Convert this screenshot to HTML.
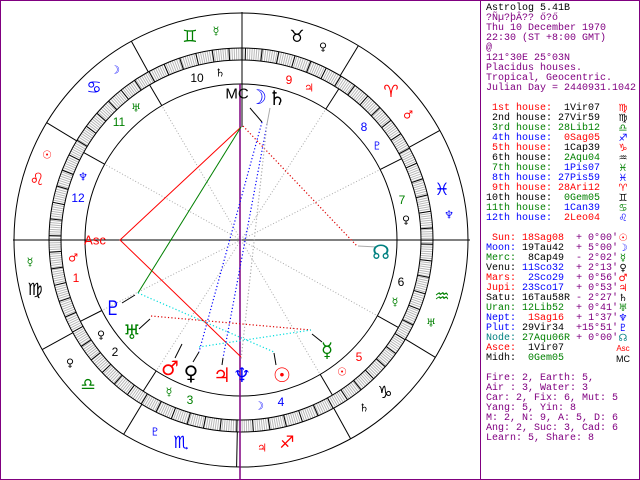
<!DOCTYPE html>
<html><head><meta charset="utf-8"><style>
html,body{margin:0;padding:0;background:#fff;}
#w{position:relative;width:640px;height:480px;overflow:hidden;background:#fff;}
svg{position:absolute;left:0;top:0;}
svg text{font-family:"DejaVu Sans",sans-serif;text-anchor:middle;dominant-baseline:central;}
pre{position:absolute;left:486px;top:4px;margin:0;font-family:"Liberation Mono",monospace;font-size:10px;line-height:10px;color:#000;}
.p{color:#800080}.r{color:#f00}.g{color:#008000}.b{color:#00f}.t{color:#008080}
.gl{position:absolute;left:616px;width:14px;text-align:center;font-family:"DejaVu Sans",sans-serif;font-size:10px;line-height:10px;}
</style></head><body><div id="w">
<svg width="640" height="480" viewBox="0 0 640 480">
<rect x="0.5" y="0.5" width="639" height="479" fill="none" stroke="#800080"/>
<line x1="480.5" y1="0" x2="480.5" y2="480" stroke="#800080"/>
<!-- ring -->
<circle cx="241" cy="240" r="186" fill="none" stroke="#b8b8b8" stroke-width="12" stroke-dasharray="1 1.2"/>
<circle cx="241" cy="240" r="186" fill="none" stroke="#000" stroke-width="12" stroke-dasharray="1 15.23" stroke-dashoffset="-3.64"/>
<g fill="none" stroke="#000" stroke-width="1">
<circle cx="241" cy="240" r="227"/>
<circle cx="241" cy="240" r="192"/>
<circle cx="241" cy="240" r="180"/>
<circle cx="241" cy="240" r="156"/>
<line x1="13" y1="240" x2="470" y2="240"/>
<line x1="242" y1="12" x2="242" y2="127"/>
<line x1="409.1" y1="147.3" x2="439.8" y2="130.4"/>
<line x1="340.2" y1="75.6" x2="358.3" y2="45.7"/>
<line x1="148.3" y1="72.0" x2="131.4" y2="41.2"/>
<line x1="76.6" y1="140.8" x2="46.7" y2="122.7"/>
<line x1="72.9" y1="332.7" x2="42.2" y2="349.6"/>
<line x1="141.8" y1="404.4" x2="123.7" y2="434.3"/>
<line x1="237.3" y1="432" x2="236.6" y2="467"/>
<line x1="333.7" y1="408.1" x2="350.6" y2="438.8"/>
<line x1="405.4" y1="339.2" x2="435.3" y2="357.3"/>
<line x1="101.8" y1="310.5" x2="80.4" y2="321.3"/>
<line x1="156.2" y1="370.9" x2="143.2" y2="391.1"/>
<line x1="320.2" y1="374.4" x2="332.4" y2="395.1"/>
<line x1="377.4" y1="315.8" x2="398.3" y2="327.4"/>
<line x1="380.2" y1="169.5" x2="401.6" y2="158.7"/>
<line x1="325.8" y1="109.1" x2="338.8" y2="88.9"/>
<line x1="161.8" y1="105.6" x2="149.6" y2="84.9"/>
<line x1="104.6" y1="164.2" x2="83.7" y2="152.6"/>
</g>
<g stroke="#aaa" stroke-width="1" stroke-dasharray="1 2">
<line x1="241" y1="240" x2="101.8" y2="310.5"/>
<line x1="241" y1="240" x2="156.2" y2="370.9"/>
<line x1="241" y1="240" x2="320.2" y2="374.4"/>
<line x1="241" y1="240" x2="377.4" y2="315.8"/>
<line x1="241" y1="240" x2="380.2" y2="169.5"/>
<line x1="241" y1="240" x2="325.8" y2="109.1"/>
<line x1="241" y1="240" x2="161.8" y2="105.6"/>
<line x1="241" y1="240" x2="104.6" y2="164.2"/>
</g>
<line x1="240" y1="84" x2="240" y2="480" stroke="#800080" stroke-width="1.5"/>
<!-- aspects -->
<polyline points="241,127 120,240 241,357" fill="none" stroke="#f00"/>
<line x1="241" y1="127" x2="138" y2="293" stroke="#008000"/>
<g fill="none" stroke-width="1.2" stroke-dasharray="1.2 2.2">
<line x1="262" y1="122" x2="199" y2="352" stroke="#00f"/>
<line x1="267" y1="124" x2="223" y2="358" stroke="#00f"/>
<line x1="243" y1="126" x2="357" y2="246" stroke="#d00"/>
<line x1="151" y1="316" x2="311" y2="330" stroke="#d00"/>
<line x1="138" y1="293" x2="274" y2="352" stroke="#0dd"/>
<line x1="199" y1="347" x2="311" y2="330" stroke="#0dd"/>
<line x1="267" y1="124" x2="241" y2="360" stroke="#aaa"/>
</g>
<g stroke-width="1">
<line x1="250" y1="108" x2="262" y2="122" stroke="#000"/>
<line x1="270" y1="108" x2="267" y2="124" stroke="#aaa"/>
<line x1="122" y1="303" x2="135" y2="295" stroke="#000"/>
<line x1="139" y1="329" x2="150" y2="319" stroke="#000"/>
<line x1="175" y1="358" x2="182" y2="344" stroke="#000"/>
<line x1="193" y1="362" x2="199" y2="352" stroke="#000"/>
<line x1="222" y1="365" x2="223" y2="358" stroke="#000"/>
<line x1="276" y1="365" x2="274" y2="353" stroke="#000"/>
<line x1="322" y1="342" x2="312" y2="334" stroke="#000"/>
<line x1="377" y1="247" x2="358" y2="246" stroke="#aaa"/>
</g>
<!-- signs -->
<g font-size="17">
<text x="297" y="37" fill="#000">♉</text>
<text x="190" y="37" fill="#008000">♊</text>
<text x="94" y="88" fill="#00f">♋</text>
<text x="37" y="180" fill="#f00">♌</text>
<text x="35" y="290" fill="#000">♍</text>
<text x="88" y="385" fill="#008000">♎</text>
<text x="181" y="443" fill="#00f">♏</text>
<text x="287" y="443" fill="#f00">♐</text>
<text x="385" y="393" fill="#000">♑</text>
<text x="442" y="297" fill="#008000">♒</text>
<text x="442" y="190" fill="#00f">♓</text>
<text x="391" y="92" fill="#f00">♈</text>
</g>
<g font-size="11">
<text x="216" y="31" fill="#008000">☿</text>
<text x="323" y="47" fill="#000">♀</text>
<text x="408" y="115" fill="#f00">♂</text>
<text x="449" y="215" fill="#00f">♆</text>
<text x="115" y="70" fill="#00f">☽</text>
<text x="47" y="155" fill="#f00">☉</text>
<text x="30" y="262" fill="#008000">☿</text>
<text x="70" y="363" fill="#000">♀</text>
<text x="155" y="432" fill="#00f">♇</text>
<text x="262" y="448" fill="#f00">♃</text>
<text x="364" y="408" fill="#000">♄</text>
<text x="431" y="323" fill="#008000">♅</text>
<text x="220" y="73" fill="#000">♄</text>
<text x="136" y="108" fill="#008000">♅</text>
<text x="83" y="177" fill="#00f">♆</text>
<text x="73" y="258" fill="#f00">♂</text>
<text x="101" y="335" fill="#000">♀</text>
<text x="169" y="392" fill="#008000">☿</text>
<text x="259" y="406" fill="#00f">☽</text>
<text x="342" y="372" fill="#f00">☉</text>
<text x="395" y="302" fill="#008000">☿</text>
<text x="406" y="220" fill="#000">♀</text>
<text x="377" y="146" fill="#00f">♇</text>
<text x="309" y="88" fill="#f00">♃</text>
</g>
<g font-size="12">
<text x="197" y="78" fill="#000" style="font-family:'Liberation Sans'">10</text>
<text x="119" y="122" fill="#008000" style="font-family:'Liberation Sans'">11</text>
<text x="78" y="198" fill="#00f" style="font-family:'Liberation Sans'">12</text>
<text x="76" y="278" fill="#f00" style="font-family:'Liberation Sans'">1</text>
<text x="115" y="352" fill="#000" style="font-family:'Liberation Sans'">2</text>
<text x="190" y="400" fill="#008000" style="font-family:'Liberation Sans'">3</text>
<text x="281" y="402" fill="#00f" style="font-family:'Liberation Sans'">4</text>
<text x="359" y="357" fill="#f00" style="font-family:'Liberation Sans'">5</text>
<text x="401" y="282" fill="#000" style="font-family:'Liberation Sans'">6</text>
<text x="402" y="200" fill="#008000" style="font-family:'Liberation Sans'">7</text>
<text x="364" y="127" fill="#00f" style="font-family:'Liberation Sans'">8</text>
<text x="289" y="80" fill="#f00" style="font-family:'Liberation Sans'">9</text>
</g>
<g font-size="20">
<text x="237" y="94" fill="#000" font-size="15" style="font-family:'Liberation Sans'">MC</text>
<text x="258" y="97" fill="#00f">☽</text>
<text x="277" y="98" fill="#000">♄</text>
<text x="95" y="240" fill="#f00" font-size="13" style="font-family:'Liberation Sans'">Asc</text>
<text x="113" y="308" fill="#00f">♇</text>
<text x="132" y="332" fill="#008000">♅</text>
<text x="170" y="368" fill="#f00">♂</text>
<text x="191" y="373" fill="#000">♀</text>
<text x="222" y="375" fill="#f00">♃</text>
<text x="242" y="375" fill="#00f">♆</text>
<text x="282" y="375" fill="#f00">☉</text>
<text x="327" y="350" fill="#008000">☿</text>
<text x="381" y="252" fill="#008080">☊</text>
</g>
</svg>
<pre>Astrolog 5.41B
<span class="p">?Ñµ?þÂ?? ő?ő
Thu 10 December 1970
22:30 (ST +8:00 GMT)
@
121°30E 25°03N
Placidus houses.
Tropical, Geocentric.
Julian Day = 2440931.1042</span>

<span class="r"> 1st house:</span>  1Vir07
 2nd house: 27Vir59
<span class="g"> 3rd house: 28Lib12</span>
<span class="b"> 4th house:</span>  <span class="r">0Sag05</span>
<span class="r"> 5th house:</span>  1Cap39
 6th house:  <span class="g">2Aqu04</span>
<span class="g"> 7th house:</span>  <span class="b">1Pis07</span>
<span class="b"> 8th house: 27Pis59</span>
<span class="r"> 9th house: 28Ari12</span>
10th house:  <span class="g">0Gem05</span>
<span class="g">11th house:</span>  <span class="b">1Can39</span>
<span class="b">12th house:</span>  <span class="r">2Leo04</span>

<span class="r"> Sun: 18Sag08</span>  <span class="p">+ 0°00'</span>
<span class="b">Moon:</span> 19Tau42  <span class="p">+ 5°00'</span>
<span class="g">Merc:</span>  8Cap49  <span class="p">- 2°02'</span>
Venu: <span class="b">11Sco32</span>  <span class="p">+ 2°13'</span>
<span class="r">Mars:</span>  <span class="b">2Sco29</span>  <span class="p">+ 0°56'</span>
<span class="r">Jupi:</span> <span class="b">23Sco17</span>  <span class="p">+ 0°53'</span>
Satu: 16Tau58R <span class="p">- 2°27'</span>
<span class="g">Uran: 12Lib52</span>  <span class="p">+ 0°41'</span>
<span class="b">Nept:</span>  <span class="r">1Sag16</span>  <span class="p">+ 1°37'</span>
<span class="b">Plut:</span> 29Vir34  <span class="p">+15°51'</span>
<span class="t">Node:</span> <span class="g">27Aqu06R</span> <span class="p">+ 0°00'</span>
<span class="r">Asce:</span>  1Vir07
Midh:  <span class="g">0Gem05</span>

<span class="p">Fire: 2, Earth: 5,
Air : 3, Water: 3
Car: 2, Fix: 6, Mut: 5
Yang: 5, Yin: 8
M: 2, N: 9, A: 5, D: 6
Ang: 2, Suc: 3, Cad: 6
Learn: 5, Share: 8</span></pre>
<div class="gl" style="top:104px;color:#f00">♍</div>
<div class="gl" style="top:114px;color:#000">♍</div>
<div class="gl" style="top:124px;color:#008000">♎</div>
<div class="gl" style="top:134px;color:#00f">♐</div>
<div class="gl" style="top:144px;color:#f00">♑</div>
<div class="gl" style="top:154px;color:#000">♒</div>
<div class="gl" style="top:164px;color:#008000">♓</div>
<div class="gl" style="top:174px;color:#00f">♓</div>
<div class="gl" style="top:184px;color:#f00">♈</div>
<div class="gl" style="top:194px;color:#000">♊</div>
<div class="gl" style="top:204px;color:#008000">♋</div>
<div class="gl" style="top:214px;color:#00f">♌</div>
<div class="gl" style="top:234px;color:#f00">☉</div>
<div class="gl" style="top:244px;color:#00f">☽</div>
<div class="gl" style="top:254px;color:#008000">☿</div>
<div class="gl" style="top:264px;color:#000">♀</div>
<div class="gl" style="top:274px;color:#f00">♂</div>
<div class="gl" style="top:284px;color:#f00">♃</div>
<div class="gl" style="top:294px;color:#000">♄</div>
<div class="gl" style="top:304px;color:#008000">♅</div>
<div class="gl" style="top:314px;color:#00f">♆</div>
<div class="gl" style="top:324px;color:#00f">♇</div>
<div class="gl" style="top:334px;color:#008080">☊</div>
<div class="gl" style="top:344px;color:#f00;font-family:'Liberation Sans';font-size:8px">Asc</div>
<div class="gl" style="top:354px;color:#000;font-family:'Liberation Sans';font-size:9px">MC</div>
</div></body></html>
